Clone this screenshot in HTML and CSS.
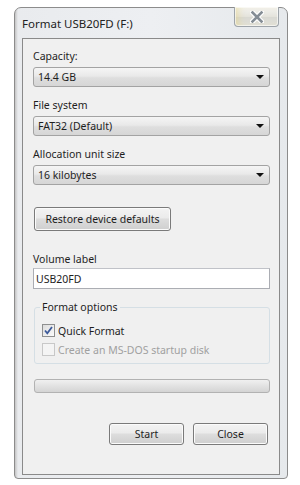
FILE: index.html
```html
<!DOCTYPE html>
<html lang="en">
<head>
    <meta charset="UTF-8">
    <meta name="viewport" content="width=device-width, initial-scale=1.0">
    <title>Format USB20FD (F:)</title>
    <link rel="stylesheet" href="styles.css">
</head>
<body>
    <div class="window">
        <div class="titlebar">
            <span class="title">Format USB20FD (F:)</span>
            <div class="close-btn">
                <svg width="14" height="12" viewBox="0 0 14 12">
                    <path d="M2 1 L12 11 M12 1 L2 11" stroke="#ffffff" stroke-width="5" stroke-linecap="round"/>
                    <path d="M2.5 1.5 L11.5 10.5 M11.5 1.5 L2.5 10.5" stroke="#858d95" stroke-width="2.6" stroke-linecap="square"/>
                </svg>
            </div>
        </div>
        <div class="client">
            <label class="field-label">Capacity:</label>
            <div class="combo"><span>14.4 GB</span><span class="arrow"></span></div>

            <label class="field-label">File system</label>
            <div class="combo"><span>FAT32 (Default)</span><span class="arrow"></span></div>

            <label class="field-label">Allocation unit size</label>
            <div class="combo last"><span>16 kilobytes</span><span class="arrow"></span></div>

            <div class="btn restore">Restore device defaults</div>

            <label class="field-label tight">Volume label</label>
            <div class="textbox">USB20FD</div>

            <fieldset class="group">
                <legend>Format options</legend>
                <div class="check-row">
                    <span class="checkbox">
                        <svg width="11" height="11" viewBox="0 0 11 11">
                            <path d="M2 5.5 L4.3 8.3 L9 2" fill="none" stroke="#3c5a9a" stroke-width="1.8"/>
                        </svg>
                    </span>
                    Quick Format
                </div>
                <div class="check-row disabled">
                    <span class="checkbox"></span>
                    Create an MS-DOS startup disk
                </div>
            </fieldset>

            <div class="progress"></div>

            <div class="actions">
                <div class="btn">Start</div>
                <div class="btn">Close</div>
            </div>
        </div>
    </div>
</body>
</html>
```

FILE: styles.css
```css
body {
    margin: 0;
    background: #ffffff;
    font-family: "Noto Sans", "Open Sans", sans-serif;
    font-size: 10.5px;
    color: #1e1e1e;
}
.window {
    margin: 7px 0 0 14px;
    width: 274px;
    height: 472px;
    box-sizing: border-box;
    border: 1px solid #8c8c8c;
    border-radius: 7px 7px 4px 4px;
    background: linear-gradient(to right, #c4c4c4 0, #e9ebee 3px, #edeff2 50%, #e6e9ec 100%);
    padding: 0 7px 3px 7px;
    display: flex;
    flex-direction: column;
}
.titlebar {
    height: 30px;
    display: flex;
    align-items: center;
}
.title {
    font-size: 11.5px;
    color: #222;
}
.close-btn {
    margin: -1px 1px 0 auto;
    align-self: flex-start;
    width: 45px;
    height: 20px;
    box-sizing: border-box;
    border: 1px solid #9ea4aa;
    border-top: none;
    border-radius: 0 0 4px 4px;
    background: linear-gradient(#f4f4f2, #e4e3dc 50%, #d8d8d2 51%, #e2e2dc);
    box-shadow: inset 0 0 0 1px rgba(255, 255, 255, 0.6), inset 6px 0 8px -4px rgba(230, 210, 120, 0.6);
    display: flex;
    align-items: center;
    justify-content: center;
}
.client {
    flex: 1;
    border: 1px solid #8a8a8a;
    background: #f0f0f0;
    padding: 10px 9px 0 10px;
    display: flex;
    flex-direction: column;
}
.field-label {
    display: block;
    line-height: 15px;
    margin-bottom: 3px;
}
.field-label.tight {
    margin-bottom: 1px;
}
.combo {
    height: 20px;
    box-sizing: border-box;
    border: 1px solid #a3a3a3;
    border-radius: 3px;
    background: linear-gradient(#f5f5f5, #e9e9e9 45%, #dedede 55%, #d6d6d6);
    padding: 0 5px 0 4px;
    margin-bottom: 11px;
    display: flex;
    align-items: center;
    justify-content: space-between;
}
.combo.last {
    margin-bottom: 22px;
}
.arrow {
    width: 0;
    height: 0;
    border-left: 4px solid transparent;
    border-right: 4px solid transparent;
    border-top: 4px solid #111;
}
.btn {
    height: 22px;
    width: 75px;
    box-sizing: border-box;
    border: 1px solid #7a7a7a;
    border-radius: 3px;
    background: linear-gradient(#f3f3f3, #ebebeb 45%, #dddddd 50%, #cfcfcf);
    box-shadow: inset 0 0 0 1px #fbfbfb;
    display: flex;
    align-items: center;
    justify-content: center;
}
.restore {
    width: 137px;
    height: 24px;
    margin: 0 0 21px 1px;
}
.textbox {
    height: 21px;
    box-sizing: border-box;
    border: 1px solid #abadb3;
    border-top-color: #c0c2c8;
    background: #ffffff;
    padding-left: 2px;
    display: flex;
    align-items: center;
}
.group {
    margin: 11px 0 0 1px;
    border: 1px solid #d5dfe5;
    border-radius: 3px;
    padding: 7px 6px 5px 7px;
    min-width: 0;
}
.group legend {
    line-height: 15px;
    padding: 0 2px;
    margin-left: -2px;
}
.check-row {
    height: 17px;
    display: flex;
    align-items: center;
    gap: 3px;
}
.check-row + .check-row {
    margin-top: 2px;
}
.check-row.disabled {
    color: #a0a0a0;
}
.checkbox {
    width: 13px;
    height: 13px;
    box-sizing: border-box;
    border: 1px solid #8e8f8f;
    background: linear-gradient(135deg, #dcdcdc, #fbfbfb);
    display: flex;
    align-items: center;
    justify-content: center;
}
.disabled .checkbox {
    border-color: #c8c8c8;
    background: #f4f4f4;
}
.progress {
    margin: 15px 0 0 1px;
    height: 14px;
    box-sizing: border-box;
    border: 1px solid #b2b2b2;
    border-radius: 3px;
    background: linear-gradient(#f0f0f0, #e2e2e2 50%, #d4d4d4);
}
.actions {
    margin: 30px 2px 0 0;
    display: flex;
    justify-content: flex-end;
    gap: 9px;
}
```
